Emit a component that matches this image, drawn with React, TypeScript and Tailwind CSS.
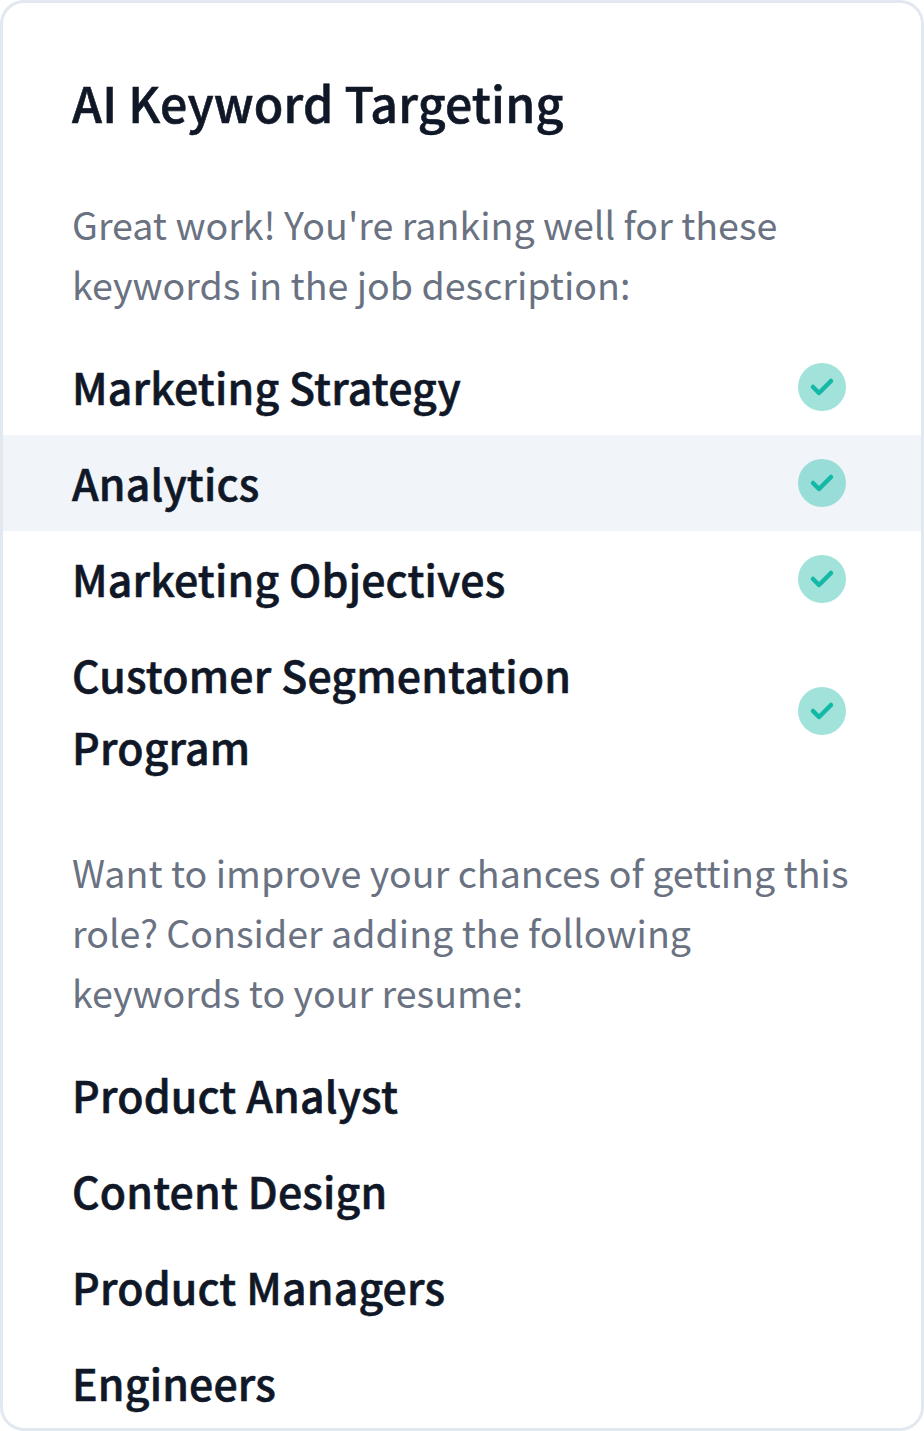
const rankingKeywords = [
  {name: 'Marketing Strategy'},
  {name: 'Analytics', active: true},
  {name: 'Marketing Objectives'},
  {name: 'Customer Segmentation Program'},
];

const suggestedKeywords = [
  'Product Analyst',
  'Content Design',
  'Product Managers',
  'Engineers',
];

const CheckIcon = () => (
  <svg viewBox="0 0 48 48" className="size-12 shrink-0" fill="none">
    <circle cx="24" cy="24" r="24" fill="#14b8a6" fillOpacity="0.4" />
    <path
      d="M15 24L21 30L33 18"
      stroke="#14b8a6"
      strokeWidth="4.5"
      strokeLinecap="round"
      strokeLinejoin="round"
    />
  </svg>
);

const App = () => {
  return (
    <main className="flex h-[1431px] w-[924px] flex-col overflow-hidden rounded-3xl border-[3px] border-slate-200 bg-white font-['Noto_Sans_CJK_SC',sans-serif] text-[37.6px] leading-[60px] text-gray-500">
      <h1 className="px-[69px] pt-[59px] text-[48.2px] leading-[81px] font-medium tracking-[0.2px] text-gray-900 [-webkit-text-stroke:0.6px_#111827]">
        AI Keyword Targeting
      </h1>

      <p className="mt-[51px] px-[69px]">
        Great work! You&apos;re ranking well for these
        <br />
        keywords in the job description:
      </p>
      <ul className="mt-[25px] text-[42.8px] leading-[72px] font-medium tracking-[0.18px] text-gray-900">
        {rankingKeywords.map(({name, active}) => (
          <li
            key={name}
            className={`flex items-center justify-between py-3 pr-[75px] pl-[69px] ${
              active ? 'bg-slate-100' : ''
            }`}
          >
            <span className="-mt-px mb-px max-w-[600px] [-webkit-text-stroke:0.6px_#111827]">
              {name}
            </span>
            <CheckIcon />
          </li>
        ))}
      </ul>

      <p className="mt-[47px] px-[69px]">
        Want to improve your chances of getting this
        <br />
        role? Consider adding the following
        <br />
        keywords to your resume:
      </p>
      <ul className="mt-6 text-[42.8px] leading-[72px] font-medium tracking-[0.18px] text-gray-900 [-webkit-text-stroke:0.6px_#111827]">
        {suggestedKeywords.map((name) => (
          <li key={name} className="px-[69px] py-3">
            {name}
          </li>
        ))}
      </ul>
    </main>
  );
};

export default App;
